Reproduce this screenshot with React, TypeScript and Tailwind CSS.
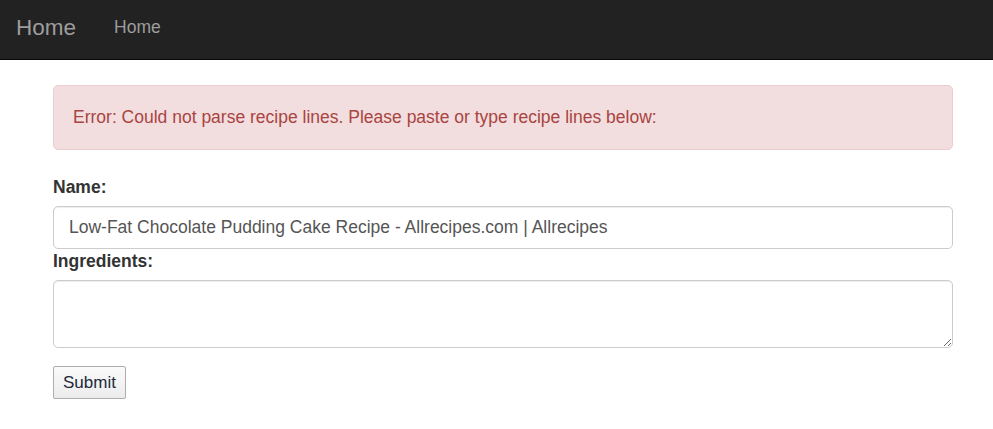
export default function App() {
  return (
    <div className="min-h-screen bg-white text-[#333] text-[17.5px] leading-[25px]" style={{ fontFamily: '"Liberation Sans", Arial, sans-serif' }}>
      <nav className="h-[60px] bg-[#222] border-b border-[#080808] flex items-center">
        <a className="ml-[16px] text-[22.5px] text-[#9d9d9d] leading-[25px] -mt-[5px]">Home</a>
        <a className="ml-[38px] text-[17.5px] text-[#9d9d9d] leading-[25px] -mt-[5px]">Home</a>
      </nav>

      <div className="w-[900px] ml-[53px] pt-[25px]">
        <div className="h-[65px] px-[19px] flex items-center bg-[#f2dede] border border-[#ebccd1] rounded-[5px] text-[#a94442]">
          Error: Could not parse recipe lines. Please paste or type recipe lines below:
        </div>

        <form className="mt-[25px]" onSubmit={(e) => e.preventDefault()}>
          <label className="block font-bold mb-[6px]">Name:</label>
          <input
            className="block w-full h-[42.5px] px-[15px] border border-[#ccc] rounded-[5px] text-[#555] shadow-[inset_0_1px_1px_rgba(0,0,0,0.075)] outline-none"
            defaultValue="Low-Fat Chocolate Pudding Cake Recipe - Allrecipes.com | Allrecipes"
          />
          <label className="block font-bold mb-[6px]">Ingredients:</label>
          <textarea
            className="block w-full h-[68px] px-[15px] py-[8px] border border-[#ccc] rounded-[5px] text-[#555] shadow-[inset_0_1px_1px_rgba(0,0,0,0.075)] outline-none"
          />
          <button
            type="submit"
            className="mt-[18px] h-[33px] px-[9px] bg-gradient-to-b from-[#fafafa] to-[#ececec] border border-[#adadad] rounded-[2px] text-[17px] text-[#222a3a] leading-none"
          >
            Submit
          </button>
        </form>
      </div>
    </div>
  );
}
